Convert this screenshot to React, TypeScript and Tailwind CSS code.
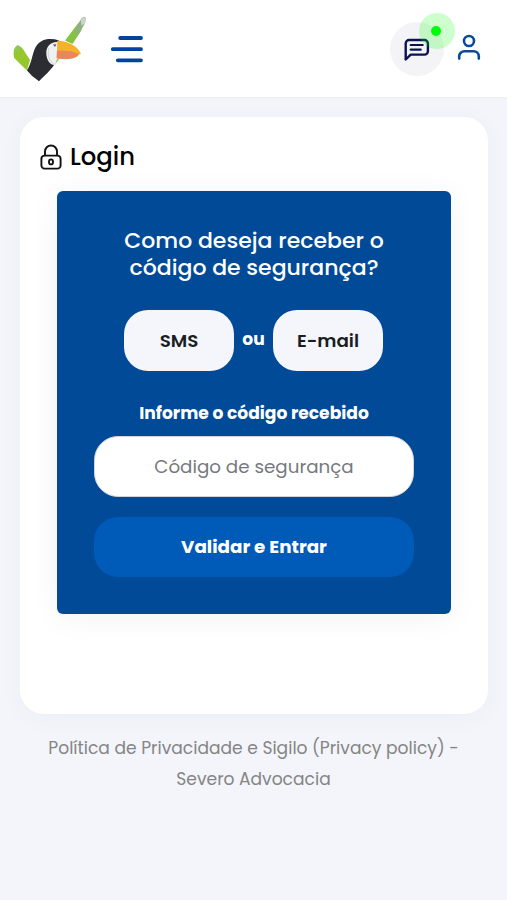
import { useState } from "react";

function ToucanLogo() {
  return (
    <svg width="76" height="70" viewBox="12 14 76 70" fill="none">
      <path d="M13.8 50 Q15 47 17.5 45.3 Q22.5 47 25.5 53 L30 60 L27 70.5 Q20 64 14.2 58 Q13.2 53 13.8 50Z" fill="#96c82d" />
      <path d="M14 50 Q15 47 17.5 45.3 L21.5 47.5 L17 52Z" fill="#8bca55" />
      <path d="M65 40.5 L78 23.5 L84 22.5 L81 31 L72.5 44Z" fill="#86c440" />
      <path d="M75 28.5 L81.5 18.5 Q84.5 15 86 18.5 L84.6 24 L76.5 37Z" fill="#8fb07f" />
      <path d="M80.8 20.5 Q83.5 15 86 18.5 L85 23.5 L81.5 25.5Z" fill="#cdd2cf" />
      <path d="M53 61 L60 57.5 L54.5 65.5Z" fill="#86c936" />
      <path
        d="M27 70.5 C32.5 62 32 51.5 37 45 C42.5 38.4 51 38 59 40.5 L57 58 C55.5 66.5 46 74 39 81.3 Q32 77 27 70.5Z"
        fill="#2c2d33"
      />
      <path d="M58 42 C50 41.5 46 47 46.3 53.5 C46.5 61 51 65.5 55 65 L58 57Z" fill="#f0f1f2" />
      <path d="M49 48 C47 54 49 61 53.5 63.5" stroke="#d0d3d7" strokeWidth="1" />
      <path d="M53 44.6 L56.3 44.2 L55 47Z" fill="#54565c" />
      <path d="M57.3 40.8 C65 40.5 77 44.5 81 53.8 L78 55 L57 51.5Z" fill="#f3b229" />
      <path d="M57 50.5 L70 51 L79 54 C77 58.5 69 60.5 56.5 58.3Z" fill="#e9865a" />
    </svg>
  );
}

function MenuIcon() {
  return (
    <svg width="34" height="28" viewBox="110 35 34 28" fill="none" stroke="#03439a" strokeWidth="3.8" strokeLinecap="round">
      <path d="M120.2 38h20.8M112.8 49.2h28.2M117.8 60.3h23.2" />
    </svg>
  );
}

function ChatIcon() {
  return (
    <svg width="28" height="28" viewBox="404 35 28 28" fill="none" stroke="#0b1450" strokeWidth="2.4" strokeLinecap="round" strokeLinejoin="round">
      <path d="M406.7 59.5V43.4a3.4 3.4 0 0 1 3.4-3.4h15.4a3.4 3.4 0 0 1 3.4 3.4v7.8a3.4 3.4 0 0 1-3.4 3.4h-13.8Z" />
      <path d="M411.7 45h12M411.7 49.7h10" strokeWidth="2.2" />
    </svg>
  );
}

function UserIcon() {
  return (
    <svg width="26" height="28" viewBox="456 33 26 28" fill="none" stroke="#0a4a9c" strokeWidth="2.6" strokeLinecap="round">
      <circle cx="469" cy="41" r="5" />
      <path d="M459.2 58.6v-2.2a5.2 5.2 0 0 1 5.2-5.2h9.2a5.2 5.2 0 0 1 5.2 5.2v2.2" />
    </svg>
  );
}

function LockIcon() {
  return (
    <svg width="22" height="26" viewBox="40 143 22 26" fill="none" stroke="#111" strokeWidth="1.9">
      <path d="M45 154.6v-4.1a6 6 0 0 1 12 0v4.1" />
      <rect x="41.4" y="154.6" width="19.2" height="13" rx="3.2" />
      <ellipse cx="51" cy="160.9" rx="2" ry="2.5" />
    </svg>
  );
}

function Header() {
  return (
    <header className="flex h-[97px] items-center bg-white pr-[25px] pl-3 shadow-[0_1px_3px_rgba(40,60,100,0.05)]">
      <ToucanLogo />
      <button className="ml-[22px]" aria-label="Menu">
        <MenuIcon />
      </button>
      <div className="ml-auto flex items-center">
        <button className="relative flex h-[54px] w-[54px] items-center justify-center rounded-full bg-[#f4f4f6]" aria-label="Chat">
          <ChatIcon />
          <span className="absolute -top-[9px] left-[29px] flex h-9 w-9 items-center justify-center rounded-full bg-[#00ff00]/20">
            <span className="mr-[2px] h-[10px] w-[10px] rounded-full bg-[#00fb0b]" />
          </span>
        </button>
        <button className="mb-1 ml-3" aria-label="Account">
          <UserIcon />
        </button>
      </div>
    </header>
  );
}

export default function App() {
  const [code, setCode] = useState("");

  return (
    <div className="min-h-screen bg-[#f3f5fa] font-['Poppins','Inter',sans-serif]">
      <Header />

      <main className="mt-5 ml-5 h-[597px] w-[468px] rounded-[24px] bg-white pt-[26px] shadow-[0_4px_24px_rgba(60,80,120,0.04)]">
        <h1 className="flex h-[27px] items-center pl-5 text-[24.3px] font-medium text-black">
          <LockIcon />
          <span className="ml-2 pt-[2px]">Login</span>
        </h1>

        <section className="mx-auto mt-[21px] flex h-[423px] w-[394px] flex-col items-center rounded-[6px] bg-[#004a98] pt-[37px] text-white shadow-[0_4px_32px_rgba(0,0,0,0.05)]">
          <h2 className="text-center text-[22px] leading-[26.5px] font-medium whitespace-nowrap">
            <span className="block">Como deseja receber o</span>
            <span className="block">código de segurança?</span>
          </h2>

          <div className="mt-[29px] mr-px flex items-center">
            <button className="h-[61px] w-[110px] rounded-[24px] bg-[#f4f6fb] text-[18.3px] font-semibold text-[#1b1d22]">SMS</button>
            <span className="w-[39px] pb-[2px] text-center text-[17.1px] font-bold">ou</span>
            <button className="h-[61px] w-[110px] rounded-[24px] bg-[#f4f6fb] text-[18.3px] font-semibold text-[#1b1d22]">E-mail</button>
          </div>

          <label htmlFor="code" className="mt-[29px] h-[26px] text-[17.1px] leading-[26px] font-bold">
            Informe o código recebido
          </label>
          <input
            id="code"
            value={code}
            onChange={(e) => setCode(e.target.value)}
            placeholder="Código de segurança"
            className="mt-[10px] h-[61px] w-[320px] rounded-[24px] border border-[#ced4da] bg-white text-center text-[18.3px] text-[#212529] outline-none placeholder:text-[#75797d]"
          />
          <button className="mt-5 h-[60px] w-[320px] rounded-[24px] bg-[#005ab7] text-[18.3px] font-bold">Validar e Entrar</button>
        </section>
      </main>

      <footer className="mt-[19px] text-center text-[17.1px] leading-[31px] text-[#858585]">
        Política de Privacidade e Sigilo (Privacy policy) -<br />
        Severo Advocacia
      </footer>
    </div>
  );
}
